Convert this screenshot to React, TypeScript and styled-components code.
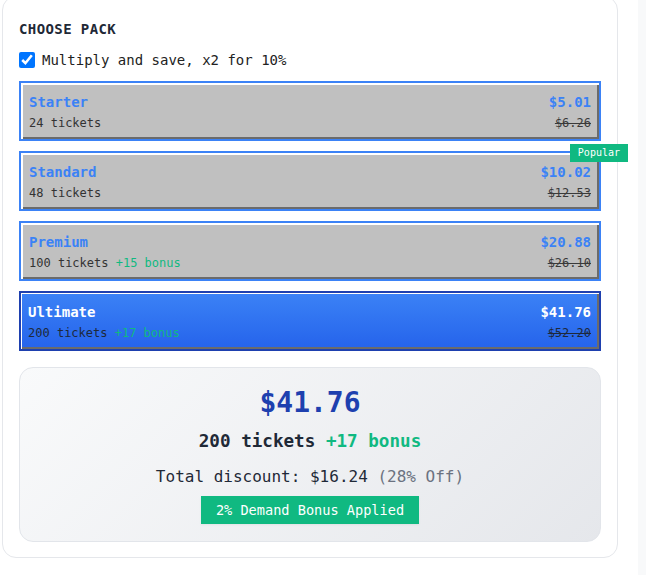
import React, { useState } from 'react';
import styled, { createGlobalStyle } from 'styled-components';

const Global = createGlobalStyle`
  html, body { margin: 0; padding: 0; background: #ffffff; }
  body { font-family: "DejaVu Sans Mono", "Liberation Mono", monospace; color: #1f2937; }
  * { box-sizing: border-box; }
`;

const Page = styled.div`
  display: flex;
  min-height: 575px;
  overflow: hidden;
`;

const Main = styled.main`
  flex: none;
  width: 638px;
  padding-left: 2px;
`;

const Aside = styled.aside`
  flex: 1;
  min-height: 575px;
  background: #f8f9fa;
`;

const Card = styled.section`
  width: 616px;
  margin-top: -4px;
  background: #ffffff;
  border: 1px solid #e5e7eb;
  border-radius: 14px;
  padding: 22px 16px 15px;
`;

const Title = styled.h2`
  margin: 0 0 10px;
  font-size: 14px;
  line-height: 21px;
  font-weight: 700;
  letter-spacing: 0.4px;
  text-transform: uppercase;
  color: #1f2937;
`;

const Option = styled.label`
  display: flex;
  align-items: center;
  gap: 7px;
  height: 20px;
  margin-bottom: 11px;
  font-size: 14px;
  color: #222;
  cursor: pointer;
`;

const Check = styled.input`
  width: 16px;
  height: 16px;
  margin: 0;
`;

const Packs = styled.div`
  display: flex;
  flex-direction: column;
  gap: 10px;
`;

const Pack = styled.button<{ $selected: boolean }>`
  position: relative;
  display: flex;
  flex-direction: column;
  gap: 4px;
  width: 100%;
  margin: 0;
  padding: 10px 8px 8px ${(p) => (p.$selected ? 7 : 8)}px;
  font-family: inherit;
  text-align: left;
  cursor: pointer;
  border: 2px solid ${(p) => (p.$selected ? '#1e40af' : '#3b82f6')};
  border-radius: 0;
  box-shadow: ${(p) =>
    p.$selected
      ? 'inset 1px 1px 0 #ffffff, inset -2px -2px 0 #6b6b6b'
      : 'inset 2px 2px 0 #ffffff, inset -2px -2px 0 #6b6b6b'};
  background: ${(p) =>
    p.$selected ? 'linear-gradient(180deg, #3b82f6 0%, #2563eb 100%)' : '#c0c0c0'};
`;

const PackRow = styled.span`
  display: flex;
  justify-content: space-between;
  align-items: baseline;
`;

const PackName = styled.span<{ $selected: boolean }>`
  font-size: 14px;
  line-height: 18px;
  font-weight: 700;
  color: ${(p) => (p.$selected ? '#ffffff' : '#3b82f6')};
`;

const PackTickets = styled.span<{ $selected: boolean }>`
  font-size: 12px;
  line-height: 16px;
  color: ${(p) => (p.$selected ? '#1e293b' : '#333333')};
`;

const Bonus = styled.span`
  color: #10b981;
`;

const OldPrice = styled.s<{ $selected: boolean }>`
  font-size: 12px;
  line-height: 16px;
  color: ${(p) => (p.$selected ? '#1e293b' : '#3a3a3a')};
`;

const PopularBadge = styled.span`
  position: absolute;
  top: -9px;
  right: -29px;
  z-index: 2;
  padding: 0 8px;
  font-size: 10px;
  line-height: 18px;
  color: #ffffff;
  background: #10b981;
`;

const Summary = styled.div`
  margin-top: 16px;
  display: flex;
  flex-direction: column;
  align-items: center;
  text-align: center;
  padding: 18px 16px 17px;
  border: 1px solid #e2e5ea;
  border-radius: 14px;
  background: linear-gradient(135deg, #f9fafb 0%, #e5e7eb 100%);
`;

const TotalPrice = styled.div`
  font-size: 28px;
  line-height: 33px;
  font-weight: 700;
  color: #1e40af;
  margin-bottom: 12px;
`;

const TotalTickets = styled.div`
  font-size: 17.6px;
  line-height: 21px;
  font-weight: 700;
  color: #1f2937;
  margin-bottom: 15px;
`;

const Discount = styled.div`
  font-size: 16px;
  line-height: 19px;
  color: #1f2937;
  margin-bottom: 10px;
`;

const Off = styled.span`
  color: #6b7280;
`;

const DemandBadge = styled.div`
  padding: 6px 15px;
  font-size: 13.6px;
  line-height: 16px;
  color: #ffffff;
  background: #10b981;
  box-shadow: 0 1px 2px rgba(0, 0, 0, 0.06);
`;

type PackData = {
  name: string;
  tickets: number;
  bonus?: number;
  price: string;
  old: string;
  discount: string;
  off: string;
  popular?: boolean;
};

const packs: PackData[] = [
  { name: 'Starter', tickets: 24, price: '$5.01', old: '$6.26', discount: '$1.25', off: '20%' },
  { name: 'Standard', tickets: 48, price: '$10.02', old: '$12.53', discount: '$2.51', off: '20%', popular: true },
  { name: 'Premium', tickets: 100, bonus: 15, price: '$20.88', old: '$26.10', discount: '$5.22', off: '20%' },
  { name: 'Ultimate', tickets: 200, bonus: 17, price: '$41.76', old: '$52.20', discount: '$16.24', off: '28%' },
];

export default function App() {
  const [multiply, setMultiply] = useState(true);
  const [selected, setSelected] = useState(3);
  const current = packs[selected];

  return (
    <Page>
      <Global />
      <Main>
        <Card>
          <Title>Choose Pack</Title>
          <Option>
            <Check type="checkbox" checked={multiply} onChange={(e) => setMultiply(e.target.checked)} />
            Multiply and save, x2 for 10%
          </Option>
          <Packs>
            {packs.map((p, i) => {
              const sel = i === selected;
              return (
                <Pack key={p.name} type="button" $selected={sel} onClick={() => setSelected(i)}>
                  {p.popular && <PopularBadge>Popular</PopularBadge>}
                  <PackRow>
                    <PackName $selected={sel}>{p.name}</PackName>
                    <PackName $selected={sel}>{p.price}</PackName>
                  </PackRow>
                  <PackRow>
                    <PackTickets $selected={sel}>
                      {p.tickets} tickets{p.bonus ? <Bonus> +{p.bonus} bonus</Bonus> : null}
                    </PackTickets>
                    <OldPrice $selected={sel}>{p.old}</OldPrice>
                  </PackRow>
                </Pack>
              );
            })}
          </Packs>
          <Summary>
            <TotalPrice>{current.price}</TotalPrice>
            <TotalTickets>
              {current.tickets} tickets{current.bonus ? <Bonus> +{current.bonus} bonus</Bonus> : null}
            </TotalTickets>
            <Discount>
              Total discount: {current.discount} <Off>({current.off} Off)</Off>
            </Discount>
            <DemandBadge>2% Demand Bonus Applied</DemandBadge>
          </Summary>
        </Card>
      </Main>
      <Aside />
    </Page>
  );
}
